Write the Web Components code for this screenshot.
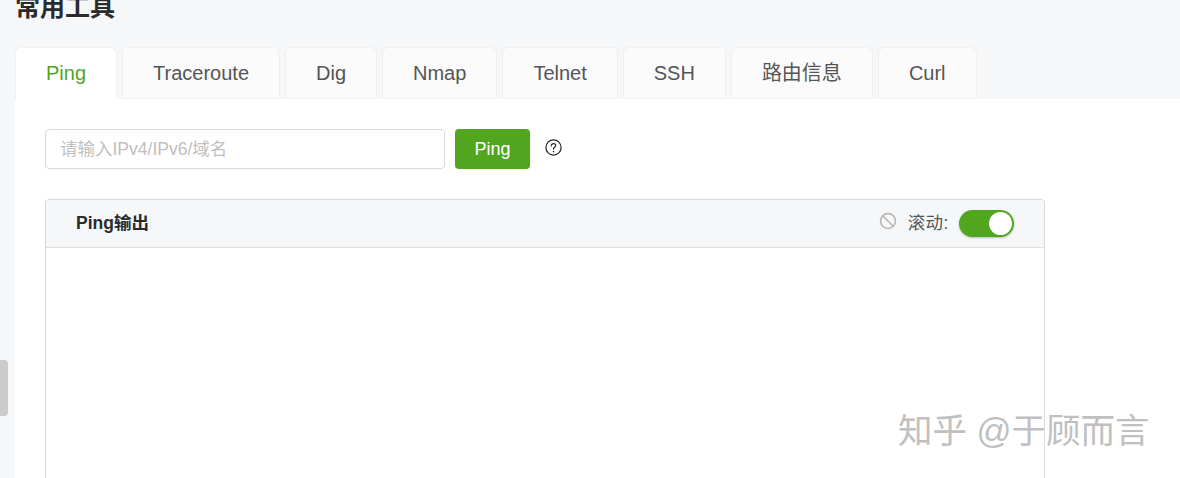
<!DOCTYPE html>
<html lang="zh">
<head>
<meta charset="utf-8">
<title>常用工具</title>
<style>
    html, body {
        margin: 0;
        height: 100%;
        overflow: hidden;
        background: #f5f7f9;
        font-family: "Liberation Sans", "Noto Sans CJK SC", sans-serif;
    }
</style>
</head>
<body>
<tools-page>
    <tool-tab active>Ping</tool-tab>
    <tool-tab>Traceroute</tool-tab>
    <tool-tab>Dig</tool-tab>
    <tool-tab>Nmap</tool-tab>
    <tool-tab>Telnet</tool-tab>
    <tool-tab>SSH</tool-tab>
    <tool-tab>路由信息</tool-tab>
    <tool-tab>Curl</tool-tab>
    <ping-form slot="panel"></ping-form>
    <output-card slot="panel" heading="Ping输出"></output-card>
    <credit-mark slot="panel">知乎 @于顾而言</credit-mark>
</tools-page>
<side-handle></side-handle>

<script>
class ToolsPage extends HTMLElement {
    constructor() {
        super();
        const shadow = this.attachShadow({ mode: "open" });
        shadow.innerHTML = `
            <style>
                :host {
                    display: block;
                    height: 478px;
                    overflow: hidden;
                }
                h2 {
                    margin: -8px 0 0 15px;
                    height: 55px;
                    font-size: 25px;
                    line-height: 30px;
                    font-weight: 700;
                    color: #2b2b2b;
                }
                .tabs {
                    display: flex;
                    gap: 5px;
                    padding-left: 15px;
                    height: 52px;
                }
                .panel {
                    box-sizing: border-box;
                    margin-left: 15px;
                    padding: 30px 30px 0;
                    height: 379px;
                    overflow: hidden;
                    background: #fff;
                    border-radius: 4px 0 0 0;
                }
            </style>
            <h2>常用工具</h2>
            <div class="tabs"><slot></slot></div>
            <div class="panel"><slot name="panel"></slot></div>
        `;
    }
}
customElements.define("tools-page", ToolsPage);

class ToolTab extends HTMLElement {
    constructor() {
        super();
        const shadow = this.attachShadow({ mode: "open" });
        shadow.innerHTML = `
            <style>
                :host {
                    display: block;
                    box-sizing: border-box;
                    height: 52px;
                    padding: 0 30px;
                    font-size: 20px;
                    line-height: 51px;
                    color: #555;
                    background: #fbfbfb;
                    border: 1px solid #f0f0f0;
                    border-radius: 6px 6px 0 0;
                }
                :host([active]) {
                    color: #52a51f;
                    background: #fff;
                    border-bottom-color: #fff;
                }
            </style>
            <slot></slot>
        `;
    }
}
customElements.define("tool-tab", ToolTab);

class PingForm extends HTMLElement {
    constructor() {
        super();
        const shadow = this.attachShadow({ mode: "open" });
        shadow.innerHTML = `
            <style>
                :host {
                    display: flex;
                    align-items: center;
                    height: 40px;
                }
                input {
                    box-sizing: border-box;
                    width: 400px;
                    height: 40px;
                    padding: 0 14px;
                    font: 17.5px "Liberation Sans", "Noto Sans CJK SC", sans-serif;
                    border: 1px solid #d9d9d9;
                    border-radius: 4px;
                    outline: none;
                }
                input::placeholder {
                    color: #bfbfbf;
                    opacity: 1;
                }
                button {
                    box-sizing: border-box;
                    width: 75px;
                    height: 40px;
                    margin-left: 10px;
                    font: 18px "Liberation Sans", sans-serif;
                    color: #fff;
                    background: #52a51f;
                    border: 0;
                    border-radius: 4px;
                }
                svg {
                    margin: 0 0 3px 15px;
                }
            </style>
            <input placeholder="请输入IPv4/IPv6/域名">
            <button>Ping</button>
            <svg width="17" height="17" viewBox="0 0 17 17" fill="none" stroke="#222" stroke-width="1.2" stroke-linecap="round">
                <circle cx="8.5" cy="8.5" r="7.6"/>
                <path d="M6.3 6.8c0-1.3 1-2.2 2.2-2.2s2.2.9 2.2 2c0 1.7-2.2 1.7-2.2 3.500"/>
                <path d="M8.5 12.6v.2" stroke-width="1.5"/>
            </svg>
        `;
    }
}
customElements.define("ping-form", PingForm);

class OutputCard extends HTMLElement {
    constructor() {
        super();
        const shadow = this.attachShadow({ mode: "open" });
        shadow.innerHTML = `
            <style>
                :host {
                    display: block;
                    box-sizing: border-box;
                    width: 1000px;
                    height: 320px;
                    margin-top: 30px;
                    background: #fff;
                    border: 1px solid #d9d9d9;
                    border-radius: 4px 4px 0 0;
                }
                header {
                    display: flex;
                    align-items: center;
                    box-sizing: border-box;
                    height: 48px;
                    padding: 0 30px;
                    background: #f5f7f9;
                    border-bottom: 1px solid #e0e0e0;
                    border-radius: 4px 4px 0 0;
                }
                .title {
                    flex: 1;
                    margin-bottom: 4px;
                    font-size: 17.5px;
                    font-weight: 700;
                    color: #2b2b2b;
                }
                svg {
                    margin: 0 11px 6px 0;
                }
                .label {
                    margin: 0 10px 5px 0;
                    font-size: 17.5px;
                    letter-spacing: .5px;
                    color: #555;
                }
                .switch {
                    position: relative;
                    width: 55px;
                    height: 27px;
                    border-radius: 14px;
                    background: #52a51f;
                    box-shadow: 0 1px 2px rgba(0, 0, 0, .25);
                }
                .switch::after {
                    content: "";
                    position: absolute;
                    right: 2px;
                    top: 2px;
                    width: 23px;
                    height: 23px;
                    border-radius: 50%;
                    background: #fff;
                }
            </style>
            <header>
                <span class="title"></span>
                <svg width="18" height="18" viewBox="0 0 18 18" fill="none" stroke="#b5b5b5" stroke-width="1.6">
                    <circle cx="9" cy="9" r="7.5"/>
                    <path d="M3.8 3.8l10.4 10.4"/>
                </svg>
                <span class="label">滚动:</span>
                <span class="switch"></span>
            </header>
        `;
        shadow.querySelector(".title").textContent = this.getAttribute("heading");
    }
}
customElements.define("output-card", OutputCard);

class SideHandle extends HTMLElement {
    constructor() {
        super();
        const shadow = this.attachShadow({ mode: "open" });
        shadow.innerHTML = `
            <style>
                :host {
                    position: absolute;
                    left: 0;
                    top: 360px;
                    width: 8px;
                    height: 56px;
                    background: #cbcbcb;
                    border-radius: 0 4px 4px 0;
                }
            </style>
        `;
    }
}
customElements.define("side-handle", SideHandle);

class CreditMark extends HTMLElement {
    constructor() {
        super();
        const shadow = this.attachShadow({ mode: "open" });
        shadow.innerHTML = `
            <style>
                :host {
                    position: absolute;
                    left: 898px;
                    top: 410px;
                    font-size: 34.5px;
                    line-height: 42px;
                    white-space: nowrap;
                    color: #c0c0c0;
                    text-shadow: 1px 1px 0 rgba(255, 255, 255, .7);
                }
            </style>
            <slot></slot>
        `;
    }
}
customElements.define("credit-mark", CreditMark);
</script>
</body>
</html>
